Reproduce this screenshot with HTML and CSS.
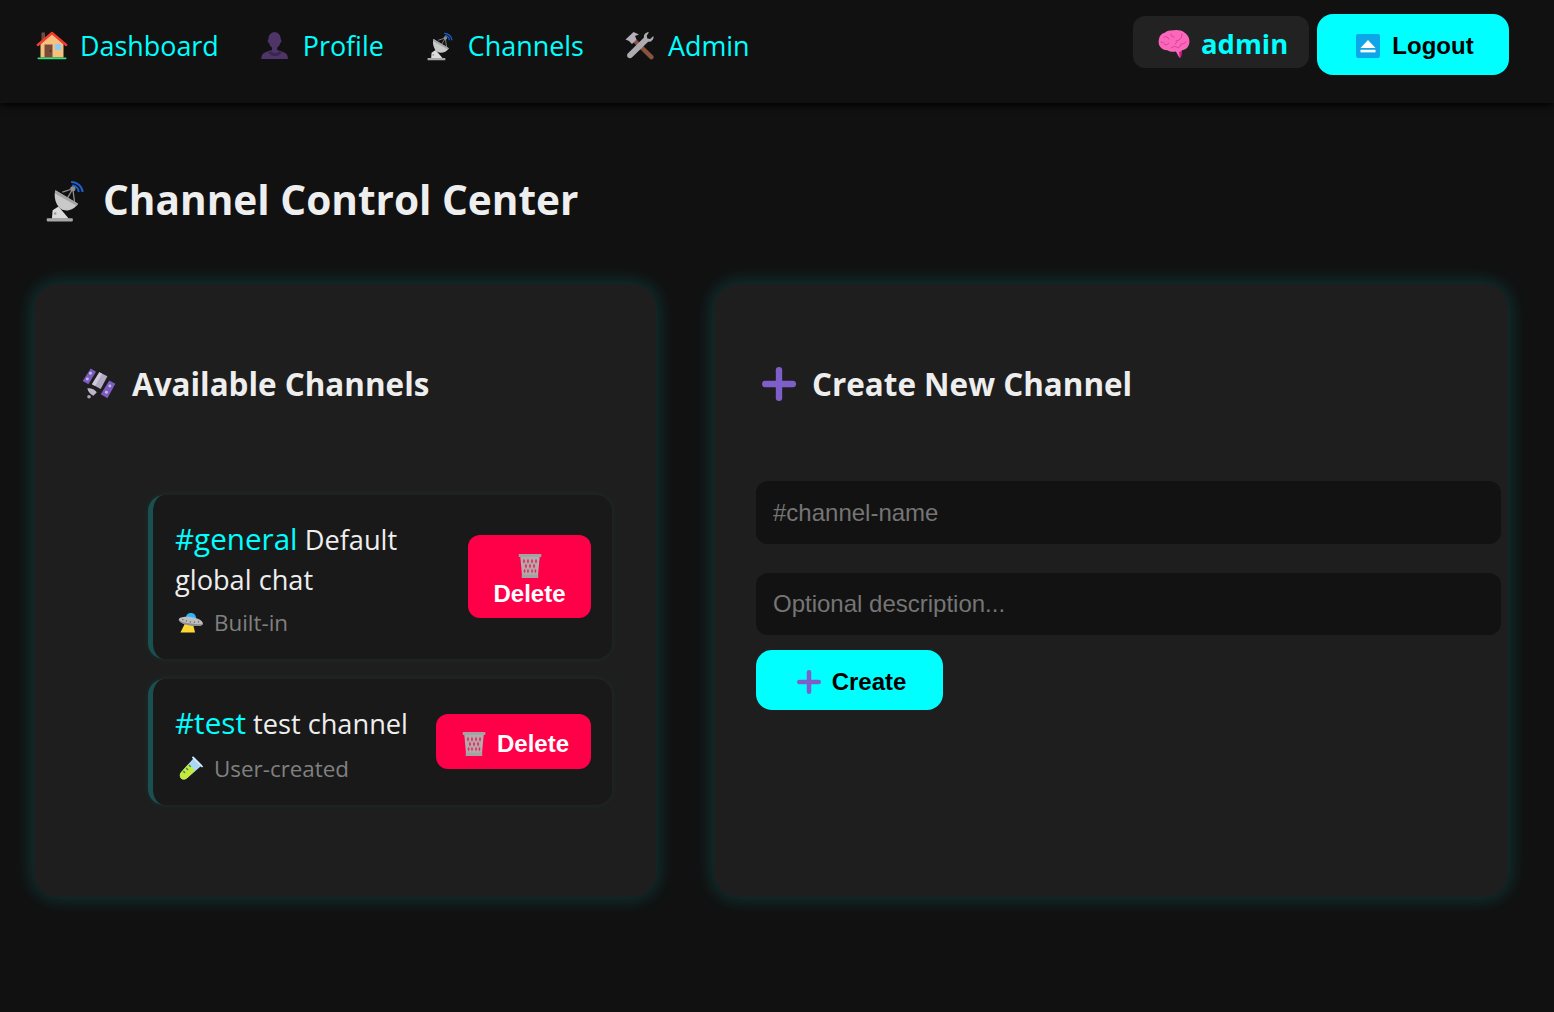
FILE: index.html
```html
<!DOCTYPE html>
<html lang="en">
<head>
<meta charset="utf-8">
<title>Channel Control Center</title>
<link rel="stylesheet" href="styles.css">
</head>
<body>
<svg class="sprite" xmlns="http://www.w3.org/2000/svg">
  <symbol id="i-house" viewBox="0 0 32 32">
    <rect x="5.500" y="2.500" width="3.500" height="8" fill="#6d4c41"/>
    <path d="M4.500 14 16 3.500 27.500 14V27.500H4.500Z" fill="#f4c27c"/>
    <path d="M1.800 15 16 3 30.200 15" fill="none" stroke="#f4392f" stroke-width="2.400" stroke-linecap="round" stroke-linejoin="round"/>
    <rect x="8.500" y="14.500" width="8" height="13" fill="#7a4a38"/>
    <circle cx="14.600" cy="21" r=".7" fill="#2d1a12"/>
    <rect x="19" y="14" width="6" height="6" rx=".5" fill="#90caf9"/>
    <rect x="1.500" y="27.400" width="29" height="1.800" rx=".9" fill="#2ee67a"/>
  </symbol>
  <symbol id="i-person" viewBox="0 0 32 32">
    <path d="M16 2c-4 0-6.500 3-6.500 7 0 .4-.8.700-.8 2s.9 2 1.300 2c.5 2 1.500 3.600 3 4.600v2.400c-3.500 1.200-7.500 2-9.300 4-1 1.100-1.300 3.500-1.500 5H29c-.2-1.500-.5-3.900-1.500-5-1.800-2-5.800-2.800-9.300-4v-2.400c1.500-1 2.500-2.600 3-4.600.4 0 1.300-.7 1.300-2s-.8-1.600-.8-2c0-4-2.500-7-6.700-7Z" fill="#4f3468"/>
    <path d="M9 22.500c2 2.500 4.500 3.500 7 3.500s5-1 7-3.500l-3-1.200c-1 1.400-2.500 2-4 2s-3-.6-4-2Z" fill="#3a2450"/>
  </symbol>
  <symbol id="i-dish" viewBox="-2 -2 32 36">
    <path d="M18.700 1.800A8.500 8.500 0 0 1 27.500 9.500" fill="none" stroke="#1e5fd0" stroke-width="1.500"/>
    <path d="M19.500 4.500A5 5 0 0 1 24.500 9.500" fill="none" stroke="#1e5fd0" stroke-width="1.500"/>
    <path d="M4 29.900 4.500 23.500 9 20.500 17 29.900Z" fill="#dcdcdc"/>
    <circle cx="6.500" cy="26" r="1" fill="#9a9a9a"/>
    <rect x="0" y="29.600" width="20" height="2.400" rx=".6" fill="#a8a8a8"/>
    <path d="M12 9.500 20 7 21.300 17M20 7 16 14" fill="none" stroke="#8d8d8d" stroke-width="1"/>
    <circle cx="20" cy="7" r="2" fill="#8f8f8f"/>
    <path d="M6.700 8.200 24 18.400C21 23 15 25 11 22.500 7 20 5 13 6.700 8.200Z" fill="#c9c9c9"/>
    <path d="M6.700 8.200 24 18.400 22.800 20 6.200 10.500Z" fill="#a3a3a3"/>
  </symbol>
  <symbol id="i-tools" viewBox="0 0 32 32">
    <path d="M9 12 12 9 29 25.500c.9.900.9 2.300 0 3.200-.9.900-2.300.900-3.200 0Z" fill="#8a5340"/>
    <path d="M1.500 9.500 9.500 2l5.500 2.500-4 1.500 1.500 3.500-4.500 4.500-3-3Z" fill="#b5adb9"/>
    <path d="M25 2.200c-2.800-.5-5.600 2-5 5.200L4 23.200c-1 1-1.300 2.600-.3 4 1.100 1.400 3 1.500 4.200.4L24.200 11.800c3 .5 6-2.400 5.200-5.800l-3.300 3.100-2.700-.7-.7-2.600Z" fill="#aeaab2"/>
  </symbol>
  <symbol id="i-brain" viewBox="0 0 32 32">
    <path d="M13 1.500c-3-.2-5 .9-6.300 2.300C3.500 4.500 1.500 7 1 10c-.7 2.600-.5 6 1.600 8.200 1.600 2 4.300 3.200 6.800 3 2.500 1.600 5.400 1.800 8.500 1.300l3.300 6 1.800-.2.600-6.800c3.200-.6 6.300-2.500 7.300-5.800 1.200-3.600.3-7.700-2.200-10.100-1.900-2.600-5.300-4.500-8.700-4.400C18 .9 15.200 1.300 13 1.500Z" fill="#fb67ba"/>
    <path d="M21 23 21.700 28.500 23 28 23.700 22Z" fill="#e0128a"/>
    <g fill="none" stroke="#d6358f" stroke-width=".8" stroke-linecap="round">
      <path d="M6 8c2-1 4 0 5 2M13 5c0 2 1 3 3 3M3 13c2 0 3 1 4 3 1.500 0 3-.5 4-2"/>
      <path d="M13 19c2-2 5-2 7 0 2-1 2.500-2.500 3-4 2 0 3.500-.5 5-2M24 5c-.5 2.500 0 4-3 6l-3 1M17 15l2-2"/>
    </g>
  </symbol>
  <symbol id="i-eject" viewBox="0 0 32 32">
    <rect x="0" y="0" width="32" height="32" rx="3" fill="#0ea5e9"/>
    <path d="M16 8 26 18.500H6Z" fill="#fff"/>
    <rect x="6" y="21" width="20" height="3.500" fill="#fff"/>
  </symbol>
  <symbol id="i-sat" viewBox="0 0 32 32">
    <path d="M8.200 1.300 13.200 4.400 6 16.300 .6 13.200Z" fill="#7c5cbf"/>
    <path d="M25.700 12.600 31.400 15.700 23.900 29.500 17.600 25.700Z" fill="#7c5cbf"/>
    <g fill="#c6b8ec"><circle cx="8" cy="5.800" r="1.400"/><circle cx="5" cy="11.300" r="1.400"/><circle cx="26.200" cy="17.800" r="1.400"/><circle cx="23" cy="23.800" r="1.400"/></g>
    <path d="M16.300 5 23.900 8.800 17.600 20.700 9.400 16.300Z" fill="#b4a9c4"/>
    <path d="M16.300 5 19 6.400 12.300 17.900 9.400 16.300Z" fill="#cfc7da"/>
    <path d="M5 20C8 19.500 12.500 21 13.800 23.900L10.700 27C8 25.500 5.500 23.500 5 20Z" fill="#bdb6c8"/>
    <circle cx="6.600" cy="28" r="1.700" fill="#aaa3b5"/>
  </symbol>
  <symbol id="i-plus" viewBox="0 0 32 32">
    <rect x="13" y="0" width="6" height="32" rx="3" fill="#7e5fc9"/>
    <rect x="0" y="13" width="32" height="6" rx="3" fill="#7e5fc9"/>
  </symbol>
  <symbol id="i-ufo" viewBox="0 0 32 32">
    <path d="M9 17h9l3 12H3Z" fill="#fdd835"/>
    <g transform="rotate(8 16 14)">
      <path d="M9 11.500C9.500 7 12 5 15.500 5s6 2 6.500 6.500Z" fill="#29b6f6"/>
      <path d="M1 15c.3-3 6.500-5 14.500-5S31 12.500 31 16c.2 2.500-6 4.500-14 4.500S.700 18 1 15Z" fill="#bdbdbd"/>
      <path d="M1 15c3 2.500 8.500 3 15 3s11.500-.5 15-2c.2 2.500-6 4.500-14 4.500S.700 18 1 15Z" fill="#8e8e8e"/>
      <g fill="#555"><circle cx="6" cy="14.500" r=".8"/><circle cx="10.500" cy="15.500" r=".8"/><circle cx="15.500" cy="16" r=".8"/><circle cx="20.500" cy="15.500" r=".8"/><circle cx="25.500" cy="14.500" r=".8"/></g>
    </g>
  </symbol>
  <symbol id="i-trash" viewBox="0 0 32 32">
    <path d="M3 3H29L26.500 30H5.500Z" fill="#b3abad"/>
    <g fill="#e8305f">
      <path d="M8 6l1.600 3.500L8 13 6.400 9.500ZM13.300 6l1.600 3.500-1.600 3.500-1.600-3.500ZM18.700 6l1.600 3.500-1.600 3.500-1.600-3.500ZM24 6l1.600 3.500L24 13l-1.600-3.500Z"/>
      <path d="M10.600 12.500l1.600 3.500-1.600 3.500L9 16ZM16 12.500l1.600 3.500-1.600 3.500-1.600-3.500ZM21.400 12.500l1.600 3.500-1.600 3.500-1.600-3.500Z"/>
      <path d="M8.800 19.500l1.500 3.300-1.500 3.200-1.500-3.200ZM13.300 19.500l1.500 3.300-1.500 3.200-1.500-3.200ZM18.700 19.500l1.500 3.300-1.500 3.200-1.500-3.200ZM23.200 19.500l1.500 3.300-1.500 3.200-1.500-3.200Z"/>
    </g>
    <rect x="1" y="0" width="30" height="4" fill="#a3a3a3"/>
    <rect x="5" y="27.500" width="22" height="4.500" fill="#a3a3a3"/>
  </symbol>
  <symbol id="i-tube" viewBox="0 0 32 32">
    <path d="M20 3 29.500 12.500 11 28.500c-2.500 2-5.500 2-7.500 0s-1.500-5.500.5-7.500Z" fill="#a9d8f5"/>
    <path d="M13 11 21 19.500 11 28.500c-2.500 2-5.500 2-7.500 0s-1.500-5.500.5-7.500Z" fill="#c6e93c"/>
    <path d="M18.500 1.500 31 14l-1.600 1.500L17 3Z" fill="#d6ecfa"/>
    <g fill="#2f8f5b"><rect x="9.500" y="16" width="3.500" height="1.800" transform="rotate(45 11 17)"/><rect x="13" y="12.500" width="3" height="1.800" transform="rotate(45 14.500 13.500)"/><rect x="6" y="20" width="3" height="1.800" transform="rotate(45 7.500 21)"/></g>
  </symbol>
</svg>

<header class="topbar">
  <nav class="nav">
    <a class="nav-link" href="#"><svg class="icon"><use href="#i-house"/></svg>Dashboard</a>
    <a class="nav-link" href="#"><svg class="icon"><use href="#i-person"/></svg>Profile</a>
    <a class="nav-link" href="#"><svg class="icon"><use href="#i-dish"/></svg>Channels</a>
    <a class="nav-link" href="#"><svg class="icon"><use href="#i-tools"/></svg>Admin</a>
  </nav>
  <div class="account">
    <div class="user-badge"><svg class="icon icon-brain"><use href="#i-brain"/></svg><span class="user-name">admin</span></div>
    <button class="btn btn-cyan btn-logout" type="button"><svg class="icon-sm"><use href="#i-eject"/></svg>Logout</button>
  </div>
</header>

<main class="page">
  <h1 class="page-title"><svg class="icon-xl"><use href="#i-dish"/></svg>Channel Control Center</h1>
  <div class="columns">
    <section class="card">
      <h2 class="card-title"><svg class="icon-lg"><use href="#i-sat"/></svg>Available Channels</h2>
      <ul class="channel-list">
        <li class="channel">
          <div class="channel-info">
            <div class="channel-head"><span class="channel-name">#general</span> Default global chat</div>
            <div class="channel-meta"><svg class="icon-meta"><use href="#i-ufo"/></svg>Built-in</div>
          </div>
          <button class="btn btn-danger btn-stacked" type="button"><svg class="icon-sm"><use href="#i-trash"/></svg>Delete</button>
        </li>
        <li class="channel channel-user">
          <div class="channel-info">
            <div class="channel-head"><span class="channel-name">#test</span> test channel</div>
            <div class="channel-meta"><svg class="icon-meta"><use href="#i-tube"/></svg>User-created</div>
          </div>
          <button class="btn btn-danger" type="button"><svg class="icon-sm"><use href="#i-trash"/></svg>Delete</button>
        </li>
      </ul>
    </section>
    <section class="card">
      <h2 class="card-title"><svg class="icon-lg"><use href="#i-plus"/></svg>Create New Channel</h2>
      <form class="create-form">
        <input class="field" type="text" placeholder="#channel-name">
        <input class="field field-desc" type="text" placeholder="Optional description...">
        <button class="btn btn-cyan btn-create" type="button"><svg class="icon-plus"><use href="#i-plus"/></svg>Create</button>
      </form>
    </section>
  </div>
</main>
</body>
</html>
```
FILE: styles.css
```css
* { box-sizing: border-box; }

html, body { margin: 0; padding: 0; }

body {
  min-height: 1012px;
  background: #111111;
  color: #eeeeee;
  font-family: "Open Sans", "Liberation Sans", sans-serif;
  overflow: hidden;
}

.sprite { display: none; }

.icon, .icon-sm, .icon-lg, .icon-xl, .icon-meta, .icon-plus { flex: none; display: block; }
.icon { width: 32px; height: 32px; }
.icon-brain { margin-top: 5px; }
.icon-sm { width: 24px; height: 24px; }
.icon-lg { width: 34px; height: 34px; margin-top: 2px; }
.icon-xl { width: 42px; height: 47px; margin-top: 1px; }
.icon-meta { width: 26px; height: 26px; }
.icon-plus { width: 24px; height: 24px; }

/* top bar */
.topbar {
  height: 103px;
  padding: 14px 45px 0 36px;
  display: flex;
  justify-content: space-between;
  align-items: flex-start;
  background: #111111;
  box-shadow: 0 2px 8px #000000;
}

.nav {
  display: flex;
  gap: 40px;
  height: 64px;
  align-items: center;
}

.nav-link {
  display: flex;
  align-items: center;
  gap: 12px;
  color: #00ffff;
  font-size: 26.9px;
  line-height: 40px;
  text-decoration: none;
}

.account {
  display: flex;
  gap: 8px;
  align-items: flex-start;
}

.user-badge {
  margin-top: 2px;
  width: 176px;
  height: 52px;
  padding-left: 25px;
  display: flex;
  align-items: center;
  gap: 11px;
  background: #222222;
  border-radius: 12px;
  color: #00ffff;
  font-size: 27.4px;
  font-weight: 700;
}

.user-name { margin-top: 2px; }

.btn {
  border: none;
  display: flex;
  align-items: center;
  justify-content: center;
  font-family: "Liberation Sans", Arial, sans-serif;
  font-size: 24px;
  font-weight: 700;
  cursor: pointer;
}

.btn-cyan { background: #00ffff; color: #000000; border-radius: 16px; }

.btn-logout { width: 192px; height: 61px; gap: 12px; padding: 2px 0 0 4px; }

/* page */
.page { padding: 0 46px 0 34px; }

.page-title {
  margin: 0;
  padding: 73px 0 0 10px;
  height: 181px;
  display: flex;
  align-items: flex-start;
  gap: 17px;
  color: #eeeeee;
  font-size: 40.6px;
  font-weight: 700;
  line-height: 48px;
}

.columns {
  display: grid;
  grid-template-columns: 622px 794px;
  gap: 58px;
}

.card {
  height: 613px;
  padding: 78px 0 0 42px;
  background: #1e1e1e;
  border-radius: 24px;
  box-shadow: 0 0 20px rgba(0, 255, 255, 0.2);
}

.card-title {
  margin: 0;
  padding: 0 0 2px 6px;
  display: flex;
  align-items: center;
  gap: 16px;
  height: 44px;
  color: #eeeeee;
  font-size: 31.4px;
  font-weight: 700;
}

/* channels */
.channel-list {
  list-style: none;
  margin: 89px 44px 0 72px;
  padding: 0;
  display: flex;
  flex-direction: column;
  gap: 20px;
}

.channel {
  display: flex;
  align-items: center;
  gap: 20px;
  padding: 15px 21px 15px 22px;
  background: #191919;
  border-left: 5px solid #1a5050;
  border-radius: 16px;
  box-shadow: 0 0 8px rgba(0, 255, 255, 0.06);
}

.channel-info { flex: 1; min-width: 0; padding-top: 10px; }

.channel-head {
  font-size: 27.2px;
  line-height: 40px;
  color: #eeeeee;
}

.channel-name {
  color: #00ffff;
  font-size: 29.6px;
  line-height: 1;
}

.channel-meta {
  height: 44px;
  display: flex;
  align-items: center;
  gap: 10px;
  padding-left: 3px;
  color: #808080;
  font-size: 22.4px;
}

.channel-user .channel-meta { margin-top: 2px; }

.btn-danger {
  flex: none;
  width: 155px;
  height: 55px;
  margin-bottom: 2px;
  gap: 11px;
  padding: 6px 0 0 4px;
  background: #ff0048;
  color: #ffffff;
  border-radius: 12px;
}

.btn-danger.btn-stacked {
  width: 123px;
  height: 83px;
  flex-direction: column;
  gap: 2px;
  padding: 9px 0 0;
  line-height: 28px;
}

/* form */
.create-form {
  margin-top: 75px;
  display: flex;
  flex-direction: column;
  align-items: flex-start;
}

.field {
  width: 745px;
  height: 63px;
  padding: 0 17px;
  background: #121212;
  border: none;
  border-radius: 12px;
  color: #eeeeee;
  font-family: "Liberation Sans", Arial, sans-serif;
  font-size: 24px;
}

.field::placeholder { color: #757575; opacity: 1; }

.field-desc { margin-top: 29px; height: 62px; }

.btn-create {
  margin-top: 15px;
  width: 187px;
  height: 60px;
  gap: 11px;
  padding: 3px 0 0 4px;
}
```
